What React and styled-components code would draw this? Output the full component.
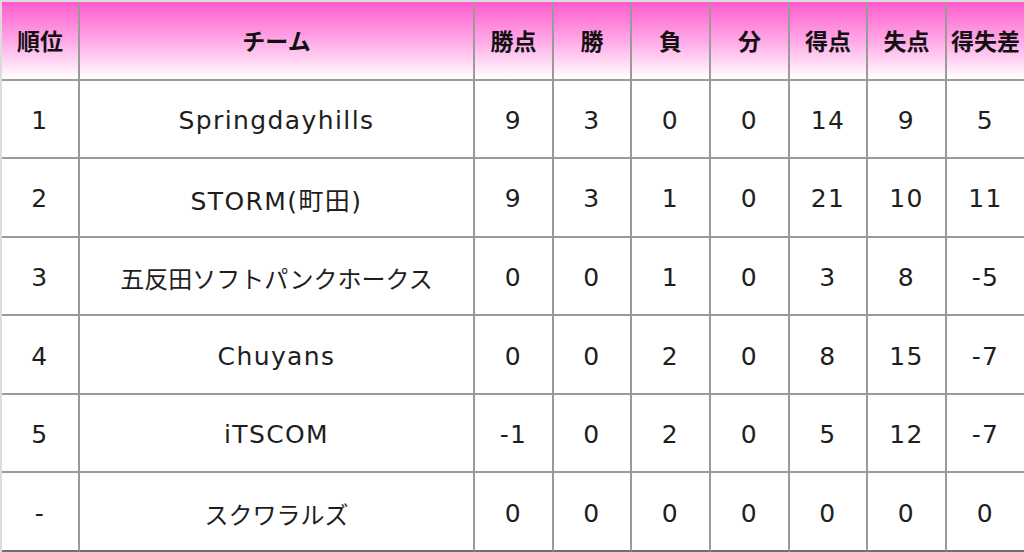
import React from "react";
import styled, { createGlobalStyle } from "styled-components";

const Global = createGlobalStyle`
  html, body { margin: 0; padding: 0; background: #fff; }
  body { font-family: "Noto Sans CJK JP", "Noto Sans", sans-serif; }
`;

const Grid = styled.div`
  width: 1024px;
  height: 552px;
  box-sizing: border-box;
  display: grid;
  grid-template-columns: 78px 395px 79px 78px 79px 79px 78px 79px 79px;
  grid-template-rows: repeat(7, 1fr);
  border-left: 2px solid #dcdcdc;
  border-top: 2px solid #dcdcdc;
`;

const Cell = styled.div`
  box-sizing: border-box;
  display: flex;
  align-items: center;
  justify-content: center;
  border-right: 2px solid ${(p) => (p.$last ? "#6e6e6e" : "#9a9a9a")};
  border-bottom: 2px solid ${(p) => (p.$bottom ? "#6e6e6e" : "#9a9a9a")};
  font-family: "DejaVu Sans", "Noto Sans CJK JP", sans-serif;
  font-size: ${(p) => (p.$jp ? "24px" : "25px")};
  letter-spacing: ${(p) => (p.$jp ? "0" : "1.4px")};
  color: #1e1e1e;
  white-space: nowrap;
  padding-top: 3px;
`;

const HeadCell = styled(Cell)`
  background: linear-gradient(to bottom, #ff5ccd 0%, #ffa8e6 50%, #ffffff 100%);
  font-family: "Noto Sans CJK JP", sans-serif;
  font-weight: bold;
  font-size: 23px;
  letter-spacing: 0;
  color: #111;
  padding-top: 0;
`;

const headers = ["順位", "チーム", "勝点", "勝", "負", "分", "得点", "失点", "得失差"];
const rows = [
  ["1", "Springdayhills", "9", "3", "0", "0", "14", "9", "5"],
  ["2", "STORM(町田)", "9", "3", "1", "0", "21", "10", "11"],
  ["3", "五反田ソフトパンクホークス", "0", "0", "1", "0", "3", "8", "-5"],
  ["4", "Chuyans", "0", "0", "2", "0", "8", "15", "-7"],
  ["5", "iTSCOM", "-1", "0", "2", "0", "5", "12", "-7"],
  ["-", "スクワラルズ", "0", "0", "0", "0", "0", "0", "0"],
];

const isJp = (s) => /^[\u3000-\u9fff\uff00-\uffef]+$/.test(s);

export default function App() {
  return (
    <>
      <Global />
      <Grid>
        {headers.map((h, i) => (
          <HeadCell key={h} $last={i === headers.length - 1}>
            {h}
          </HeadCell>
        ))}
        {rows.map((r, ri) =>
          r.map((v, ci) => (
            <Cell
              key={ri + "-" + ci}
              $last={ci === r.length - 1}
              $bottom={ri === rows.length - 1}
              $jp={isJp(v)}
            >
              {v}
            </Cell>
          ))
        )}
      </Grid>
    </>
  );
}
